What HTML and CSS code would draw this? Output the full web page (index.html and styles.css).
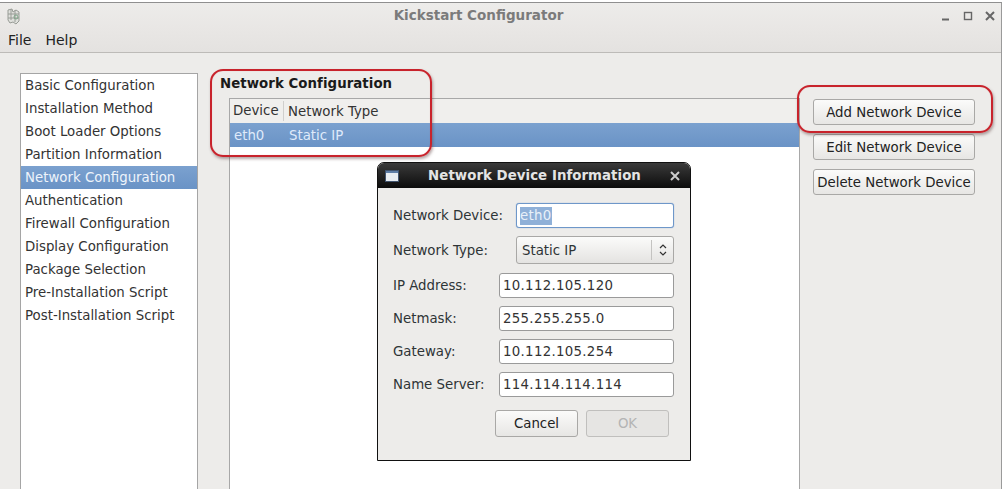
FILE: index.html
```html
<!DOCTYPE html>
<html lang="en">
<head>
<meta charset="utf-8">
<title>Kickstart Configurator</title>
<link rel="stylesheet" href="styles.css">
</head>
<body>
<div class="window">
  <header class="titlebar">
    <svg class="app-icon" width="16" height="18" viewBox="0 0 16 18" fill="none" stroke="#989c96" stroke-width="1">
      <path d="M2 3l4-1 1 3 3-2 3 2v9l-3 3-3-2-3 1-2-3z" fill="#dfe0dc"/>
      <path d="M5 2v11M9 3v12M2 7h11M2 11h11"/>
      <circle cx="10" cy="10" r="2" stroke="#7fa488"/>
    </svg>
    <span class="title">Kickstart Configurator</span>
    <div class="win-controls">
      <svg width="10" height="10" viewBox="0 0 10 10"><path d="M1 8.5h7" stroke="#666" stroke-width="2"/></svg>
      <svg width="10" height="10" viewBox="0 0 10 10" fill="none"><rect x="1.5" y="1.5" width="7" height="7" stroke="#666" stroke-width="1.4"/></svg>
      <svg width="10" height="10" viewBox="0 0 10 10"><path d="M1 1l8 8M9 1l-8 8" stroke="#666" stroke-width="2"/></svg>
    </div>
  </header>
  <nav class="menubar"><span>File</span><span>Help</span></nav>
  <main class="content">
    <ul class="sidebar">
      <li>Basic Configuration</li>
      <li>Installation Method</li>
      <li>Boot Loader Options</li>
      <li>Partition Information</li>
      <li class="selected">Network Configuration</li>
      <li>Authentication</li>
      <li>Firewall Configuration</li>
      <li>Display Configuration</li>
      <li>Package Selection</li>
      <li>Pre-Installation Script</li>
      <li>Post-Installation Script</li>
    </ul>
    <section class="panel">
      <h2 class="panel-title">Network Configuration</h2>
      <div class="panel-body">
        <div class="table">
          <div class="table-head"><span class="col-device">Device</span><span class="col-type">Network Type</span></div>
          <div class="table-row"><span class="col-device">eth0</span><span class="col-type">Static IP</span></div>
        </div>
        <div class="actions">
          <button class="btn">Add Network Device</button>
          <button class="btn">Edit Network Device</button>
          <button class="btn">Delete Network Device</button>
        </div>
      </div>
    </section>
  </main>
</div>

<div class="mark mark-config"></div>
<div class="mark mark-add"></div>

<div class="dialog">
  <div class="dialog-title">
    <svg width="14" height="12" viewBox="0 0 14 12"><rect x="0" y="0" width="14" height="12" fill="#e8edf2"/><rect x="0" y="0" width="14" height="3" fill="#5f7fa8"/><rect x="0.5" y="0.5" width="13" height="11" fill="none" stroke="#41546e"/></svg>
    <span class="dialog-name">Network Device Information</span>
    <svg width="10" height="10" viewBox="0 0 10 10"><path d="M1 1l8 8M9 1l-8 8" stroke="#ccc" stroke-width="2"/></svg>
  </div>
  <div class="dialog-body">
    <div class="form-row"><label>Network Device:</label><div class="entry entry-focus short"><span class="sel">eth0</span></div></div>
    <div class="form-row row-combo"><label>Network Type:</label>
      <div class="combo short"><span>Static IP</span>
        <span class="combo-arrows"><svg width="8" height="14" viewBox="0 0 8 14" fill="none" stroke="#333" stroke-width="1.2"><path d="M1 5l3-3 3 3M1 9l3 3 3-3"/></svg></span>
      </div>
    </div>
    <div class="form-row"><label>IP Address:</label><div class="entry">10.112.105.120</div></div>
    <div class="form-row"><label>Netmask:</label><div class="entry">255.255.255.0</div></div>
    <div class="form-row"><label>Gateway:</label><div class="entry">10.112.105.254</div></div>
    <div class="form-row"><label>Name Server:</label><div class="entry">114.114.114.114</div></div>
    <div class="dialog-actions">
      <button class="btn dlg-btn">Cancel</button>
      <button class="btn dlg-btn disabled">OK</button>
    </div>
  </div>
</div>
</body>
</html>
```
FILE: styles.css
```css
* { box-sizing: border-box; }
html, body { margin: 0; height: 100%; overflow: hidden; background: #fff; }
body { font: 13.33px/23px "DejaVu Sans", sans-serif; color: #2e3436; position: relative; padding-top: 2px; }

.window {
  height: 487px; width: 1002px;
  border-top: 1px solid #8f8f8f;
  border-right: 1px solid #9a9a9a;
  background: #edecea;
  display: flex; flex-direction: column;
}
.titlebar {
  height: 24px; flex: none;
  display: flex; align-items: center; position: relative;
  padding: 1px 0 0 6px;
  background: linear-gradient(#edecea, #e9e7e5);
}
.app-icon { flex: none; }
.title {
  position: absolute; left: 0; right: 44px; top: 0; text-align: center;
  font-weight: bold; font-size: 13.5px; line-height: 24px; color: #7b7b7b;
}
.win-controls { margin-left: auto; margin-right: 6px; display: flex; gap: 12px; }
.menubar {
  height: 26px; flex: none; display: flex; gap: 14px; padding: 0 8px;
  line-height: 26px; font-size: 14px; color: #222; background: linear-gradient(#e9e7e5, #e4e2e0);
  border-bottom: 1px solid #bdbbb8;
}
.content { flex: 1; display: flex; padding: 20px 0 0 20px; gap: 22px; min-height: 0; }

.sidebar {
  list-style: none; margin: 0; padding: 0;
  width: 178px; flex: none;
  background: #fff; border: 1px solid #a5a5a5; border-bottom: 0;
}
.sidebar li { height: 23px; padding-left: 4px; color: #333; white-space: nowrap; }
.sidebar li.selected { background: linear-gradient(#7ba1cf, #6a93c6); color: #eef4fb; }

.panel { flex: 1; min-width: 0; display: flex; flex-direction: column; }
.panel-title { margin: 0 0 4px; font-size: 13.33px; line-height: 21px; font-weight: bold; color: #1a1a1a; letter-spacing: .05px; flex: none; }
.panel-body { display: flex; margin-left: 9px; flex: 1; min-height: 0; }
.table { width: 571px; flex: none; background: #fff; border: 1px solid #a8a8a8; border-bottom: 0; }
.table-head { height: 24px; display: flex; align-items: center; background: #f0efed; color: #333; }
.table-head .col-device { width: 54px; padding-left: 3px; border-right: 1px solid #d0cfcd; line-height: 20px; }
.table-head .col-type { padding-left: 4px; }
.table-row { height: 24px; display: flex; align-items: center; background: linear-gradient(#7ba1cf, #6a93c6); color: #dfeafa; }
.table-row .col-device { width: 55px; padding-left: 4px; }
.table-row .col-type { padding-left: 4px; }

.actions { display: flex; flex-direction: column; align-self: flex-start; gap: 9px; margin: 1px 0 0 13px; width: 162px; }
.btn {
  font: inherit; color: #222; height: 26px; padding: 0;
  background: linear-gradient(#fbfbfa, #e7e6e4);
  border: 1px solid #a9a8a6; border-radius: 3px; white-space: nowrap;
}

.mark {
  position: absolute; border: 2px solid #c8232c; border-radius: 13px;
  box-shadow: 1px 2px 3px rgba(90,60,60,.45), inset 0 0 1px rgba(200,40,40,.3);
  pointer-events: none;
}
.mark-config { left: 210px; top: 69px; width: 222px; height: 88px; }
.mark-add { left: 797px; top: 85px; width: 196px; height: 48px; }

.dialog {
  position: absolute; left: 377px; top: 162px; width: 314px; height: 299px;
  background: #edecea; border: 1px solid #111; border-radius: 7px 7px 0 0; overflow: hidden;
}
.dialog-title {
  height: 25px; display: flex; align-items: center; padding: 0 10px 0 7px;
  background: linear-gradient(#3a3a3a, #0c0c0c);
}
.dialog-name { flex: 1; text-align: center; color: #e4e4e4; font-weight: bold; font-size: 13.33px; letter-spacing: .05px; }
.dialog-body { padding: 15px 16px 0 15px; display: flex; flex-direction: column; gap: 8px; }
.form-row { display: flex; justify-content: space-between; align-items: center; height: 25px; }
.form-row label { color: #2e3436; }
.row-combo { height: 28px; margin-bottom: 1px; }
.entry {
  width: 175px; height: 25px; padding-left: 3px; line-height: 23px;
  background: #fff; border: 1px solid #9a9a9a; border-radius: 3px; color: #333; letter-spacing: .3px;
}
.short { width: 158px; }
.entry-focus { border-color: #6e97c9; box-shadow: 0 0 1px #6e97c9; }
.sel { background: #8fb0d8; color: #e9f0f9; display: inline-block; line-height: 18px; }
.combo {
  height: 28px; display: flex; align-items: center; justify-content: space-between; padding-left: 5px;
  background: linear-gradient(#fbfbfa, #e4e3e1); border: 1px solid #a9a8a6; border-radius: 3px;
}
.combo-arrows { width: 22px; height: 20px; display: flex; align-items: center; justify-content: center; border-left: 1px solid #c4c3c1; }
.dialog-actions { display: flex; gap: 8px; margin: 5px 5px 0 0; justify-content: flex-end; }
.dlg-btn { width: 83px; height: 27px; }
.disabled { color: #b4b4b4; border-color: #c0bfbd; background: #e6e5e3; }
```
